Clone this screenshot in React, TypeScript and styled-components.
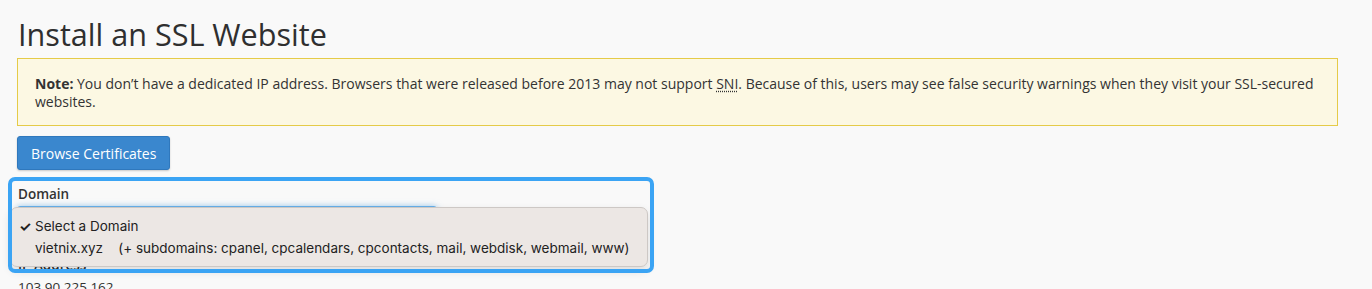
import React from 'react'
import styled, { createGlobalStyle } from 'styled-components'

const GlobalStyle = createGlobalStyle`
  html, body {
    margin: 0;
    padding: 0;
    background: #f9f9f9;
    font-family: 'Open Sans', 'Liberation Sans', sans-serif;
    color: #333;
    overflow: hidden;
  }
`

const Page = styled.div({
  position: 'relative',
  padding: '15px 34px 0 17px',
  height: 289,
  boxSizing: 'border-box',
})

const Title = styled.h1({
  margin: '0 0 5px 1px',
  fontSize: 30.6,
  fontWeight: 400,
  lineHeight: '38px',
  color: '#2f2f2f',
})

const Note = styled.div({
  background: '#fcf8e3',
  border: '1px solid #e5cb48',
  padding: '16px 17px 14px',
  fontSize: 14,
  lineHeight: '18px',
  color: '#333',
  '& b': { fontWeight: 700 },
  '& abbr': { textDecoration: 'underline dotted', textUnderlineOffset: 2 },
})

const Button = styled.button({
  marginTop: 10,
  height: 34,
  padding: '0 13px',
  background: '#3a87ce',
  border: '1px solid #2f78bd',
  borderRadius: 3,
  color: '#fff',
  fontFamily: "'Open Sans', sans-serif",
  fontSize: 14,
  boxShadow: '0 1px 2px rgba(0,0,0,0.2)',
})

const FormGroup = styled.div<{ $gap?: number }>(({ $gap }) => ({
  marginTop: $gap ?? 14,
  display: 'flex',
  flexDirection: 'column',
  alignItems: 'flex-start',
}))

const Label = styled.div({
  marginLeft: 1,
  fontSize: 13.5,
  fontWeight: 600,
  lineHeight: '20px',
  color: '#333',
})

const SelectWrap = styled.div({
  position: 'relative',
  marginTop: 2,
})

const Select = styled.div({
  width: 420,
  height: 34,
  boxSizing: 'border-box',
  background: '#fff',
  border: '1px solid #66afe9',
  borderRadius: 3,
  boxShadow: '0 0 6px rgba(102,175,233,0.6)',
})

const Menu = styled.div({
  position: 'absolute',
  left: -7,
  top: 1,
  width: 638,
  boxSizing: 'border-box',
  padding: '7px 0 7px',
  background: '#ece7e4',
  border: '1px solid #cdc8c5',
  borderRadius: 7,
  boxShadow: '0 4px 10px rgba(0,0,0,0.12)',
  fontFamily: "Inter, 'Liberation Sans', sans-serif",
  fontSize: 13.5,
  color: '#222',
  zIndex: 2,
})

const Option = styled.div({
  display: 'flex',
  alignItems: 'center',
  height: 22,
  paddingLeft: 8,
  whiteSpace: 'pre',
})

const Check = styled.span({
  width: 16,
  fontSize: 14,
  fontWeight: 700,
})

const Value = styled.div({
  marginTop: 2,
  marginLeft: 1,
  fontSize: 13.5,
  lineHeight: '20px',
  color: '#333',
})

const Highlight = styled.div({
  position: 'absolute',
  left: 8,
  top: 177,
  width: 646,
  height: 96,
  boxSizing: 'border-box',
  border: '4px solid #3ba4f4',
  borderRadius: 7,
  pointerEvents: 'none',
  zIndex: 3,
})

export default function App() {
  return (
    <>
      <GlobalStyle />
      <Page>
        <Title>Install an SSL Website</Title>
        <Note>
          <b>Note:</b> You don’t have a dedicated IP address. Browsers that were released before 2013 may not support{' '}
          <abbr>SNI</abbr>. Because of this, users may see false security warnings when they visit your SSL-secured
          websites.
        </Note>
        <Button>Browse Certificates</Button>
        <FormGroup>
          <Label>Domain</Label>
          <SelectWrap>
            <Select />
            <Menu>
              <Option>
                <Check>✓</Check>Select a Domain
              </Option>
              <Option>
                <Check />
                {'vietnix.xyz    (+ subdomains: cpanel, cpcalendars, cpcontacts, mail, webdisk, webmail, www)'}
              </Option>
            </Menu>
          </SelectWrap>
        </FormGroup>
        <FormGroup $gap={15}>
          <Label>IP Address</Label>
          <Value>103.90.225.162</Value>
        </FormGroup>
        <Highlight />
      </Page>
    </>
  )
}
